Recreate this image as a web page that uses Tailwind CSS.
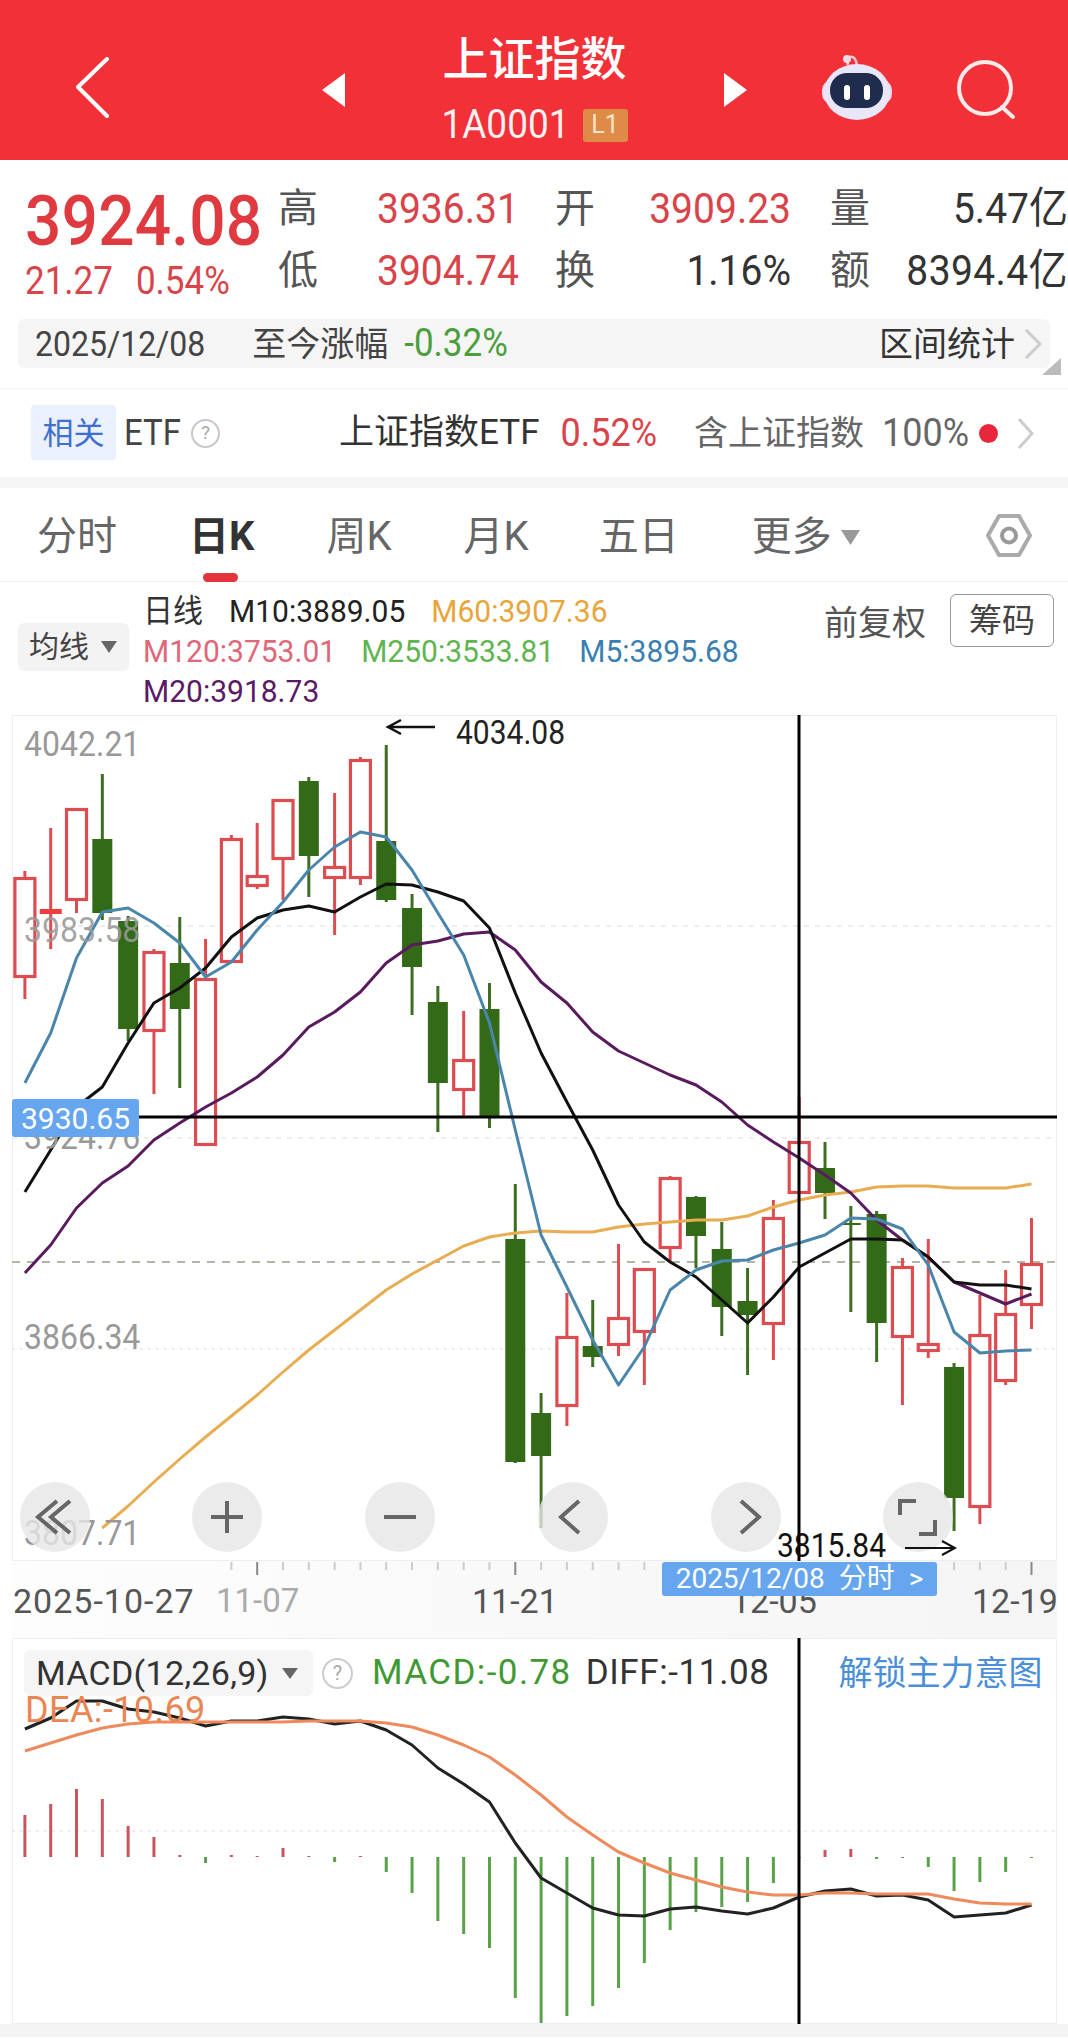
<!DOCTYPE html>
<html lang="zh-CN">
<head>
  <meta charset="UTF-8" />
  <title>上证指数</title>
  <script src="https://cdn.jsdelivr.net/npm/@tailwindcss/browser@4"></script>
</head>
<body class="bg-white font-['Roboto','Noto_Sans_CJK_SC',sans-serif] w-[1068px] h-[2042px] overflow-hidden">
  <!-- Header -->
  <header class="h-[160px] bg-[#f13038] flex items-start text-white">
    <svg class="ml-[75px] mt-[57px] w-[34px] h-[61px]" viewBox="0 0 34 61" fill="none" stroke="white" stroke-width="4" stroke-linecap="round" stroke-linejoin="round"><path d="M32 2 3 30 32 59"/></svg>
    <svg class="ml-[213px] mt-[73px] w-[23px] h-[34px]" viewBox="0 0 23 34" fill="white"><path d="M23 0v34L0 17z"/></svg>
    <div class="w-[379px] flex flex-col items-center">
      <div class="mt-[33px] h-[52px] text-[46px] leading-[52px] font-medium">上证指数</div>
      <div class="mt-[23px] flex items-center gap-[13px]">
        <span class="text-[37px] leading-[34px] text-[#fff1f1] scale-y-110">1A0001</span>
        <span class="w-[45px] h-[33px] bg-[#dd8b47] rounded-[3px] flex items-center justify-center text-[25px] text-[#f8e3c8]">L1</span>
      </div>
    </div>
    <svg class="mt-[73px] w-[23px] h-[34px]" viewBox="0 0 23 34" fill="white"><path d="M0 0v34L23 17z"/></svg>
    <svg class="ml-[74px] mt-[52px] w-[72px] h-[70px]" viewBox="0 0 72 70">
      <path d="M27 13c-2-6 2-9 4-8 3 0 4 3 5 8" fill="none" stroke="#f7c9cf" stroke-width="2.5"/>
      <circle cx="26" cy="7" r="4" fill="#f4dbe3"/>
      <rect x="1" y="28" width="70" height="24" rx="10" fill="#f0d9ef"/>
      <ellipse cx="36" cy="40" rx="33" ry="28" fill="#e9e6f8"/>
      <rect x="9" y="21" width="53" height="35" rx="17" fill="#1f2c4d"/>
      <rect x="23" y="33" width="6" height="15" rx="3" fill="white"/>
      <rect x="43" y="33" width="6" height="15" rx="3" fill="white"/>
    </svg>
    <svg class="ml-[64px] mt-[58px] w-[60px] h-[62px]" viewBox="0 0 60 62" fill="none" stroke="#ffeaea" stroke-width="4" stroke-linecap="round"><circle cx="28" cy="30" r="26"/><path d="M45 49 56 59"/></svg>
  </header>

  <!-- Quote -->
  <section class="h-[159px] flex">
    <div class="w-[278px] pl-[25px] text-[#de3a40]">
      <div class="mt-[28px] h-[68px] text-[64px] leading-[68px] font-medium tracking-[0.2px] scale-y-110 origin-left">3924.08</div>
      <div class="mt-[6px] flex gap-[23px] text-[35px] leading-[40px] text-[#d9444a]"><span class="scale-y-110">21.27</span><span class="scale-y-110">0.54%</span></div>
    </div>
    <div class="mt-[18px] w-[790px] h-[124px] grid grid-cols-[99px_178px_59px_216px_60px_178px] grid-rows-[62px_62px] items-center text-[39px] leading-[62px]">
      <span class="text-[40px] text-[#555]">高</span><span class="text-[#d9444a] scale-y-110 origin-left">3936.31</span>
      <span class="text-[40px] text-[#555]">开</span><span class="text-right pr-[39px] text-[#d9444a] scale-y-110">3909.23</span>
      <span class="text-[40px] text-[#555]">量</span><span class="text-right text-[#333] scale-y-110">5.47亿</span>
      <span class="text-[40px] text-[#555]">低</span><span class="text-[#d9444a] scale-y-110 origin-left">3904.74</span>
      <span class="text-[40px] text-[#555]">换</span><span class="text-right pr-[39px] text-[#333] scale-y-110">1.16%</span>
      <span class="text-[40px] text-[#555]">额</span><span class="text-right text-[#333] scale-y-110 tracking-[0.4px]">8394.4亿</span>
    </div>
  </section>

  <!-- Range bar -->
  <div class="relative ml-[18px] w-[1032px] h-[49px] bg-[#f5f5f5] rounded-[6px] flex items-center text-[#444]">
    <span class="ml-[17px] text-[32px] leading-none scale-y-110">2025/12/08</span>
    <span class="ml-[47px] text-[34px] leading-none">至今涨幅</span>
    <span class="ml-[16px] text-[35px] leading-none text-[#4a9e3c] scale-y-110">-0.32%</span>
    <span class="ml-auto text-[34px] leading-none text-[#333]">区间统计</span>
    <svg class="ml-[9px] mr-[8px] w-[18px] h-[30px]" viewBox="0 0 18 30" fill="none" stroke="#ccc" stroke-width="3"><path d="M2 1 16 15 2 29"/></svg>
    <svg class="absolute left-[1024px] top-[39px] w-[19px] h-[17px]" viewBox="0 0 19 17" fill="#bbb"><path d="M19 0v17H0z"/></svg>
  </div>

  <!-- ETF row -->
  <section class="mt-[20px] h-[89px] border-t border-[#f3f3f3] flex items-start">
    <span class="ml-[31px] mt-[16px] w-[85px] h-[55px] bg-[#eaf1fc] rounded-[4px] flex items-center justify-center pt-[3px] text-[31px] text-[#3f6fd1]">相关</span>
    <div class="h-[88px] flex items-center">
      <span class="ml-[8px] text-[33px] text-[#444] scale-y-110">ETF</span>
      <span class="ml-[10px] w-[29px] h-[29px] rounded-full border-2 border-[#c8c8c8] flex items-center justify-center text-[19px] text-[#aaa]">?</span>
      <span class="ml-[119px] text-[35px] text-[#333]">上证指数ETF</span>
      <span class="ml-[21px] text-[36px] text-[#d9444a] scale-y-110">0.52%</span>
      <span class="ml-[37px] text-[34px] text-[#666]">含上证指数</span>
      <span class="ml-[18px] text-[36px] text-[#666] scale-y-110">100%</span>
      <span class="ml-[10px] w-[19px] h-[19px] rounded-full bg-[#e8283a]"></span>
      <svg class="ml-[19px] w-[17px] h-[31px]" viewBox="0 0 17 31" fill="none" stroke="#ccc" stroke-width="3"><path d="M2 1 15 15.5 2 30"/></svg>
    </div>
  </section>
  <div class="h-[11px] bg-[#f5f5f5]"></div>

  <!-- Period tabs -->
  <nav class="relative h-[94px] border-b border-[#f0f0f0] flex items-center pt-[5px] text-[40px] text-[#666]">
    <span class="ml-[37px]">分时</span>
    <span class="ml-[72px] font-bold text-[#333]">日K</span>
    <span class="ml-[72px]">周K</span>
    <span class="ml-[72px]">月K</span>
    <span class="ml-[70px]">五日</span>
    <span class="ml-[73px]">更多</span>
    <svg class="ml-[9px] w-[19px] h-[15px]" viewBox="0 0 19 15" fill="#999"><path d="M0 0h19L9.5 15z"/></svg>
    <svg class="ml-[126px] -mt-[3px] w-[46px] h-[43px]" viewBox="0 0 46 43" fill="none" stroke="#aaa" stroke-width="4" stroke-linejoin="round"><path d="M13 2h20l11 19.500L33 41H13L2 21.500z"/><circle cx="23" cy="21.500" r="7" stroke="#999"/></svg>
    <span class="absolute left-[203px] top-[85px] w-[35px] h-[9px] rounded-full bg-[#e5333b]"></span>
  </nav>

  <!-- Indicator legend -->
  <section class="h-[133px] flex items-start text-[30px] leading-[40px]">
    <div class="ml-[18px] mt-[41px] w-[111px] h-[48px] bg-[#f3f3f3] rounded-[6px] flex items-center pl-[11px] text-[#444]">
      均线<svg class="ml-[12px] w-[16px] h-[12px]" viewBox="0 0 16 12" fill="#666"><path d="M0 0h16L8 12z"/></svg>
    </div>
    <div class="ml-[14px] mt-[10px] w-[640px] flex flex-col">
      <div class="flex gap-[26px]"><span class="text-[#333] scale-y-105">日线</span><span class="text-[#222] scale-y-105">M10:3889.05</span><span class="text-[#e8a53b] scale-y-105">M60:3907.36</span></div>
      <div class="flex gap-[25px]"><span class="text-[#e0677a] scale-y-105">M120:3753.01</span><span class="text-[#5fb550] scale-y-105">M250:3533.81</span><span class="text-[#3b7fb0] scale-y-105">M5:3895.68</span></div>
      <div class="flex"><span class="text-[#5a1a66] scale-y-105">M20:3918.73</span></div>
    </div>
    <span class="ml-[41px] mt-[21px] text-[34px] text-[#555]">前复权</span>
    <span class="ml-[24px] mt-[12px] w-[104px] h-[53px] border border-[#999] rounded-[6px] flex items-center justify-center text-[33px] text-[#444]">筹码</span>
  </section>

  <!-- K-line chart -->
  <section class="relative ml-[12px] w-[1045px] h-[846px]">
    <svg id="kline" class="absolute inset-0 w-full h-full" viewBox="12 715 1045 846"></svg>
    <span class="absolute left-[12px] top-[11px] text-[32px] leading-[36px] text-[#999] scale-y-110 origin-left">4042.21</span>
    <span class="absolute left-[12px] top-[197px] text-[32px] leading-[36px] text-[#999]/90 scale-y-110 origin-left">3983.58</span>
    <span class="absolute left-[12px] top-[404px] text-[32px] leading-[36px] text-[#999] scale-y-110 origin-left">3924.76</span>
    <span class="absolute left-[12px] top-[604px] text-[32px] leading-[36px] text-[#999] scale-y-110 origin-left">3866.34</span>
    <span class="absolute left-[12px] top-[800px] text-[32px] leading-[36px] text-[#999] scale-y-110 origin-left">3807.71</span>
    <span class="absolute left-0 top-[384px] w-[127px] h-[38px] rounded-[3px] bg-[#66a6ef] flex items-center justify-center text-[30px] text-white">3930.65</span>
    <span class="absolute left-[444px] top-0 text-[30px] leading-[36px] text-[#222] scale-y-110">4034.08</span>
    <span class="absolute left-[765px] top-[813px] text-[30px] leading-[36px] text-[#111] scale-y-110">3815.84</span>

    <button class="absolute left-[8px] top-[767px] w-[70px] h-[70px] rounded-full bg-[#e6e6e6]/80">
      <svg viewBox="0 0 70 70" fill="none" stroke="#666" stroke-width="4"><path d="M37 19 18 35 37 51M50 19 31 35 50 51"/></svg>
    </button>
    <button class="absolute left-[180px] top-[767px] w-[70px] h-[70px] rounded-full bg-[#e6e6e6]/80">
      <svg viewBox="0 0 70 70" fill="none" stroke="#666" stroke-width="4"><path d="M19 35h32M35 19v32"/></svg>
    </button>
    <button class="absolute left-[353px] top-[767px] w-[70px] h-[70px] rounded-full bg-[#e6e6e6]/80">
      <svg viewBox="0 0 70 70" fill="none" stroke="#666" stroke-width="4"><path d="M19 35h32"/></svg>
    </button>
    <button class="absolute left-[526px] top-[767px] w-[70px] h-[70px] rounded-full bg-[#e6e6e6]/80">
      <svg viewBox="0 0 70 70" fill="none" stroke="#666" stroke-width="4"><path d="M41 19 23 35 41 51"/></svg>
    </button>
    <button class="absolute left-[699px] top-[767px] w-[70px] h-[70px] rounded-full bg-[#e6e6e6]/80">
      <svg viewBox="0 0 70 70" fill="none" stroke="#666" stroke-width="4"><path d="M30 19 48 35 30 51"/></svg>
    </button>
    <button class="absolute left-[871px] top-[767px] w-[70px] h-[70px] rounded-full bg-[#e6e6e6]/80">
      <svg viewBox="0 0 70 70" fill="none" stroke="#666" stroke-width="4"><path d="M17 33V19h16M36 52h16V38"/></svg>
    </button>
    <svg class="absolute left-[893px] top-[825px] w-[52px] h-[16px]" viewBox="0 0 52 16" fill="none" stroke="#111" stroke-width="2"><path d="M0 8h49M37 1l13 7-13 7"/></svg>
  </section>

  <!-- Date axis -->
  <section class="relative ml-[12px] w-[1045px] h-[77px] bg-linear-to-r from-[#fdfdfd] to-[#f5f5f5] whitespace-nowrap">
    <svg id="axis" class="absolute left-0 top-0 w-[1045px] h-[16px]" viewBox="12 1561 1045 16"></svg>
    <span class="absolute left-[1px] top-[22px] text-[34px] leading-[36px] tracking-[1px] text-[#555]">2025-10-27</span>
    <span class="absolute left-[204px] top-[22px] text-[33px] leading-[36px] text-[#aaa]">11-07</span>
    <span class="absolute left-[460px] top-[22px] text-[34px] leading-[36px] text-[#555]">11-21</span>
    <span class="absolute left-[719px] top-[22px] text-[34px] leading-[36px] text-[#555]">12-05</span>
    <span class="absolute left-[960px] top-[22px] text-[34px] leading-[36px] text-[#555]">12-19</span>
    <span class="absolute left-[650px] top-px w-[275px] h-[34px] rounded-[3px] bg-[#66a6ef] flex items-center justify-center gap-[14px] text-[28px] text-white"><span>2025/12/08</span><span>分时</span><span>&gt;</span></span>
  </section>

  <!-- MACD -->
  <section class="relative ml-[12px] w-[1045px] h-[386px]">
    <svg id="macd" class="absolute inset-0 w-full h-full" viewBox="12 1638 1045 386"></svg>
    <div class="relative pt-[12px] flex items-start">
      <div class="ml-[12px] w-[289px] h-[46px] bg-[#f5f5f5] rounded-[6px] flex items-center pl-[12px] text-[34px] tracking-[0.3px] text-[#333] whitespace-nowrap">
        MACD(12,26,9)<svg class="ml-[13px] w-[16px] h-[11px]" viewBox="0 0 16 11" fill="#666"><path d="M0 0h16L8 11z"/></svg>
      </div>
      <div class="h-[46px] flex items-center text-[35px] whitespace-nowrap">
        <span class="ml-[9px] w-[31px] h-[31px] rounded-full border-2 border-[#ccc] flex items-center justify-center text-[20px] text-[#aaa]">?</span>
        <span class="ml-[19px] tracking-[1.4px] text-[#3f9a33]">MACD:-0.78</span>
        <span class="ml-[14px] tracking-[0.6px] text-[#333]">DIFF:-11.08</span>
        <span class="ml-[69px] text-[34px] text-[#4a8fd8]">解锁主力意图</span>
      </div>
    </div>
    <span class="absolute left-[13px] top-[52px] text-[36px] leading-[40px] tracking-[0.4px] text-[#ea8653]">DEA:-10.69</span>
  </section>
  <div class="h-[13px] bg-[#f4f4f4]"></div>

  <script>
    // x of candle i, in page coordinates
    const cx = i => 24.9 + 25.81 * i;
    // [wick top, body top, body bottom, wick bottom, kind] kind: 0 down, 1 up, 2 flat red
    const candles = [
      [871,877,978,999,1],[828,909,914,949,2],[808,808,901,913,1],[774,839,913,920,0],[916,921,1029,1041,0],
      [949,951,1032,1094,1],[917,963,1009,1088,0],[939,978,1146,1146,1],[835,838,963,963,1],[823,875,887,889,1],
      [799,799,860,900,1],[777,781,856,897,0],[793,866,879,935,1],[757,759,879,885,1],[745,841,900,902,0],
      [894,908,967,1015,0],[986,1002,1083,1132,0],[1011,1059,1091,1117,1],[983,1009,1117,1128,0],[1184,1239,1462,1463,0],
      [1393,1413,1456,1528,0],[1293,1336,1407,1426,1],[1300,1346,1357,1367,0],[1244,1317,1346,1356,1],[1268,1268,1333,1385,1],
      [1176,1177,1249,1262,1],[1196,1197,1236,1268,0],[1222,1249,1307,1336,0],[1268,1301,1315,1375,0],[1200,1217,1325,1360,1],
      [1097,1141,1194,1194,1],[1142,1168,1193,1219,0],[1206,1223,1225,1312,0],[1211,1214,1323,1362,0],[1258,1266,1338,1405,1],
      [1239,1343,1352,1358,1],[1363,1367,1498,1531,0],[1295,1334,1508,1524,1],[1270,1313,1382,1385,1],[1218,1263,1306,1329,1]
    ];
    const m5 = [1083,1033,958,912,908,923,943,977,962,930,902,870,847,832,837,870,913,955,1023,1130,1235,1287,1340,1385,1347,1290,1270,1261,1260,1250,1243,1235,1218,1219,1229,1265,1332,1353,1351,1350];
    const m10 = [1192,1150,1107,1087,1043,1003,988,968,937,918,910,906,912,897,884,885,892,901,928,993,1053,1102,1150,1205,1242,1262,1277,1300,1323,1297,1267,1253,1239,1239,1240,1257,1282,1285,1285,1289];
    const m20 = [1273,1245,1208,1183,1166,1140,1123,1107,1093,1077,1055,1027,1012,992,963,945,941,934,932,950,982,1003,1032,1051,1063,1075,1085,1102,1125,1142,1158,1175,1193,1220,1240,1257,1282,1293,1304,1294];
    const m60 = [null,null,null,1528,1506,1482,1459,1437,1416,1395,1372,1350,1330,1310,1290,1274,1260,1246,1237,1233,1231,1232,1232,1227,1224,1222,1220,1220,1216,1207,1200,1195,1192,1187,1186,1186,1188,1188,1188,1184];
    const diff = [1729,1718,1701,1701,1709,1712,1718,1726,1721,1721,1717,1719,1724,1721,1730,1745,1768,1784,1802,1843,1878,1893,1908,1915,1916,1909,1907,1911,1914,1908,1897,1891,1889,1896,1895,1900,1917,1915,1913,1905];
    const dea = [1751,1743,1735,1728,1724,1722,1722,1722,1722,1722,1722,1721,1721,1721,1723,1727,1735,1745,1757,1775,1795,1817,1835,1852,1863,1873,1880,1887,1892,1895,1895,1893,1893,1894,1894,1894,1899,1903,1904,1904];
    const hist = [1815,1804,1789,1799,1826,1837,1855,1863,1855,1856,1848,1856,1862,1856,1872,1893,1921,1934,1948,1998,2023,2016,2006,1988,1963,1930,1912,1907,1902,1883,1858,1850,1849,1859,1858,1867,1891,1882,1872,1858];

    const poly = (ys, color, w) => `<polyline fill="none" stroke="${color}" stroke-width="${w}" stroke-linejoin="round" points="${ys.map((y, i) => y === null ? '' : cx(i).toFixed(1) + ',' + y).join(' ')}"/>`;
    const hline = (y, color, dash, w) => `<line x1="12" x2="1057" y1="${y}" y2="${y}" stroke="${color}" stroke-width="${w}" stroke-dasharray="${dash}"/>`;
    const frame = (y, h) => `<rect x="12.500" y="${y + 0.5}" width="1044" height="${h - 1}" fill="none" stroke="#eeeeee"/>`;

    let k = frame(715, 846);
    k += hline(926, '#e8e8e8', '5 6', 1.5) + hline(1138, '#e8e8e8', '5 6', 1.5) + hline(1349, '#e8e8e8', '3 5', 1.5) + hline(1262, '#b5b5a8', '8 7', 2);
    candles.forEach(([top, bt, bb, bot, kind], i) => {
      const x = cx(i);
      const col = kind ? '#dd4c50' : '#336a17';
      k += `<line x1="${x}" x2="${x}" y1="${top}" y2="${bot}" stroke="${kind ? '#dd4c50' : '#3d6e22'}" stroke-width="3"/>`;
      if (kind === 1) k += `<rect x="${x - 10}" y="${bt + 1.5}" width="20" height="${bb - bt - 3}" fill="white" stroke="${col}" stroke-width="3.200"/>`;
      else if (kind === 2) k += `<rect x="${x - 11}" y="${bt}" width="22" height="${bb - bt}" fill="#ee3d3d"/>`;
      else k += `<rect x="${x - 10}" y="${bt}" width="20" height="${bb - bt}" fill="${col}"/>`;
    });
    k += poly(m60, '#e8ad52', 3) + poly(m20, '#5a1a5e', 3) + poly(m10, '#111', 3) + poly(m5, '#4a86ab', 3);
    k += `<line x1="12" x2="1057" y1="1117" y2="1117" stroke="#000" stroke-width="3"/><line x1="799" x2="799" y1="715" y2="1561" stroke="#000" stroke-width="3"/>`;
    k += `<path d="M435 727H388M401 720l-13 7 13 7" fill="none" stroke="#111" stroke-width="2.500"/>`;
    document.getElementById('kline').innerHTML = k;

    let a = '';
    for (let i = 8; i < 40; i++) {
      const major = i === 9 || i === 19 || i === 29 || i === 39;
      a += `<line x1="${cx(i)}" x2="${cx(i)}" y1="1562" y2="${major ? 1575 : 1570}" stroke="${major ? '#888' : '#ccc'}" stroke-width="2"/>`;
    }
    document.getElementById('axis').innerHTML = a;

    let m = frame(1638, 386) + hline(1831, '#e8e8e8', '3 5', 1.500);
    hist.forEach((y, i) => {
      const up = y < 1857;
      m += `<line x1="${cx(i)}" x2="${cx(i)}" y1="1857" y2="${y}" stroke="${up ? '#c9555f' : '#5aa24a'}" stroke-width="3"/>`;
    });
    m += poly(diff, '#222', 3) + poly(dea, '#ee8a5c', 3);
    m += `<line x1="799" x2="799" y1="1638" y2="2024" stroke="#000" stroke-width="3"/>`;
    document.getElementById('macd').innerHTML = m;
  </script>
</body>
</html>
